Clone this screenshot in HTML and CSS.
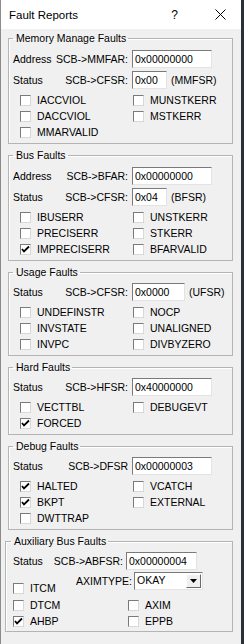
FILE: index.html
```html
<!DOCTYPE html>
<html lang="en">

<head>
    <meta charset="UTF-8">
    <title>Fault Reports</title>
    <link rel="stylesheet" href="styles.css">
</head>

<body>
    <div class="window">
        <div class="titlebar">
            <span class="title">Fault Reports</span>
            <span class="help">?</span>
            <span class="close">
                <svg width="11" height="11" viewBox="0 0 11 11"><path d="M0.5 0.5 L10.5 10.5 M10.5 0.5 L0.5 10.5" stroke="#000" stroke-width="1" fill="none"/></svg>
            </span>
        </div>

        <div class="content">
            <fieldset class="group group--addr">
                <legend>Memory Manage Faults</legend>
                <div class="field-row">
                    <div class="labels"><span>Address</span><span>SCB-&gt;MMFAR:</span></div>
                    <div class="edit edit--wide">0x00000000</div>
                </div>
                <div class="field-row">
                    <div class="labels"><span>Status</span><span>SCB-&gt;CFSR:</span></div>
                    <div class="edit edit--byte">0x00</div>
                    <span class="suffix">(MMFSR)</span>
                </div>
                <div class="checks">
                    <label class="check"><span class="box"></span>IACCVIOL</label>
                    <label class="check"><span class="box"></span>MUNSTKERR</label>
                    <label class="check"><span class="box"></span>DACCVIOL</label>
                    <label class="check"><span class="box"></span>MSTKERR</label>
                    <label class="check"><span class="box"></span>MMARVALID</label>
                </div>
            </fieldset>

            <fieldset class="group group--addr">
                <legend>Bus Faults</legend>
                <div class="field-row">
                    <div class="labels"><span>Address</span><span>SCB-&gt;BFAR:</span></div>
                    <div class="edit edit--wide">0x00000000</div>
                </div>
                <div class="field-row">
                    <div class="labels"><span>Status</span><span>SCB-&gt;CFSR:</span></div>
                    <div class="edit edit--byte">0x04</div>
                    <span class="suffix">(BFSR)</span>
                </div>
                <div class="checks">
                    <label class="check"><span class="box"></span>IBUSERR</label>
                    <label class="check"><span class="box"></span>UNSTKERR</label>
                    <label class="check"><span class="box"></span>PRECISERR</label>
                    <label class="check"><span class="box"></span>STKERR</label>
                    <label class="check"><span class="box checked"><svg width="9" height="9" viewBox="0 0 9 9"><path d="M1 4 L3 6.5 L8 1.5" stroke="#000" stroke-width="1.8" fill="none"/></svg></span>IMPRECISERR</label>
                    <label class="check"><span class="box"></span>BFARVALID</label>
                </div>
            </fieldset>

            <fieldset class="group">
                <legend>Usage Faults</legend>
                <div class="field-row">
                    <div class="labels"><span>Status</span><span>SCB-&gt;CFSR:</span></div>
                    <div class="edit edit--half">0x0000</div>
                    <span class="suffix">(UFSR)</span>
                </div>
                <div class="checks">
                    <label class="check"><span class="box"></span>UNDEFINSTR</label>
                    <label class="check"><span class="box"></span>NOCP</label>
                    <label class="check"><span class="box"></span>INVSTATE</label>
                    <label class="check"><span class="box"></span>UNALIGNED</label>
                    <label class="check"><span class="box"></span>INVPC</label>
                    <label class="check"><span class="box"></span>DIVBYZERO</label>
                </div>
            </fieldset>

            <fieldset class="group">
                <legend>Hard Faults</legend>
                <div class="field-row">
                    <div class="labels"><span>Status</span><span>SCB-&gt;HFSR:</span></div>
                    <div class="edit edit--wide">0x40000000</div>
                </div>
                <div class="checks">
                    <label class="check"><span class="box"></span>VECTTBL</label>
                    <label class="check"><span class="box"></span>DEBUGEVT</label>
                    <label class="check"><span class="box checked"><svg width="9" height="9" viewBox="0 0 9 9"><path d="M1 4 L3 6.5 L8 1.5" stroke="#000" stroke-width="1.8" fill="none"/></svg></span>FORCED</label>
                </div>
            </fieldset>

            <fieldset class="group">
                <legend>Debug Faults</legend>
                <div class="field-row">
                    <div class="labels"><span>Status</span><span>SCB-&gt;DFSR</span></div>
                    <div class="edit edit--wide">0x00000003</div>
                </div>
                <div class="checks">
                    <label class="check"><span class="box checked"><svg width="9" height="9" viewBox="0 0 9 9"><path d="M1 4 L3 6.5 L8 1.5" stroke="#000" stroke-width="1.8" fill="none"/></svg></span>HALTED</label>
                    <label class="check"><span class="box"></span>VCATCH</label>
                    <label class="check"><span class="box checked"><svg width="9" height="9" viewBox="0 0 9 9"><path d="M1 4 L3 6.5 L8 1.5" stroke="#000" stroke-width="1.8" fill="none"/></svg></span>BKPT</label>
                    <label class="check"><span class="box"></span>EXTERNAL</label>
                    <label class="check"><span class="box"></span>DWTTRAP</label>
                </div>
            </fieldset>

            <fieldset class="group group--aux">
                <legend>Auxiliary Bus Faults</legend>
                <div class="field-row">
                    <div class="labels"><span>Status</span><span>SCB-&gt;ABFSR:</span></div>
                    <div class="edit edit--aux">0x00000004</div>
                </div>
                <div class="aux-row">
                    <label class="check"><span class="box"></span>ITCM</label>
                    <div class="axim">
                        <span>AXIMTYPE:</span>
                        <div class="combo">
                            <span class="combo-text">OKAY</span>
                            <span class="combo-btn">
                                <svg width="7" height="4" viewBox="0 0 7 4"><path d="M0 0 H7 L3.5 4 Z" fill="#000"/></svg>
                            </span>
                        </div>
                    </div>
                </div>
                <div class="checks">
                    <label class="check"><span class="box"></span>DTCM</label>
                    <label class="check"><span class="box"></span>AXIM</label>
                    <label class="check"><span class="box checked"><svg width="9" height="9" viewBox="0 0 9 9"><path d="M1 4 L3 6.5 L8 1.5" stroke="#000" stroke-width="1.8" fill="none"/></svg></span>AHBP</label>
                    <label class="check"><span class="box"></span>EPPB</label>
                </div>
            </fieldset>
        </div>
    </div>
</body>

</html>
```

FILE: styles.css
```css
* {
    box-sizing: border-box;
}

body {
    margin: 0;
    width: 244px;
    height: 644px;
    overflow: hidden;
    background: #2b3038;
    font-family: 'Liberation Sans', Arial, sans-serif;
    font-size: 10.5px;
    color: #000;
}

.window {
    width: 241px;
    height: 644px;
    background: #f0f0f0;
    border-left: 1px solid #8c8c8c;
}

.titlebar {
    height: 29px;
    background: #fff;
    display: flex;
    align-items: center;
    padding-left: 8px;
    font-size: 11.5px;
}

.title {
    flex: 1;
}

.help {
    font-size: 12px;
    margin-right: 37px;
}

.close {
    display: flex;
    margin-right: 15px;
}

.content {
    padding-top: 3px;
}

.group {
    margin: 0 0 0 7px;
    padding: 3px 4px 3px 4px;
    width: 225px;
    min-width: 0;
    border: 1px solid #b4b4b4;
    box-shadow: inset 1px 1px 0 #fff;
}

.group + .group {
    margin-top: 5px;
}

.group legend {
    padding: 0 2px 0 3px;
    line-height: 12px;
}

.field-row {
    display: flex;
    align-items: center;
    height: 21px;
}

.group--addr .field-row:first-of-type {
    margin-top: 1px;
}

.labels {
    display: flex;
    justify-content: space-between;
    width: 119px;
    padding-right: 4px;
}

.edit {
    height: 18px;
    background: #fff;
    border: 1px solid;
    border-color: #7a7a7a #e3e3e3 #e3e3e3 #7a7a7a;
    padding-left: 2px;
    line-height: 16px;
}

.edit--wide {
    width: 80px;
}

.edit--byte {
    width: 35px;
}

.edit--half {
    width: 53px;
}

.edit--aux {
    width: 71px;
}

.suffix {
    margin-left: 4px;
}

.checks {
    display: grid;
    grid-template-columns: 113px 1fr;
    padding-left: 7px;
    margin-top: 2px;
}

.check {
    display: flex;
    align-items: center;
    gap: 6px;
    height: 16px;
}

.box {
    width: 11px;
    height: 11px;
    background: #fff;
    border: 1px solid;
    border-color: #7a7a7a #d8d8d8 #d8d8d8 #7a7a7a;
    display: flex;
    align-items: center;
    justify-content: center;
}

.group--aux {
    margin-left: 4px;
    width: 228px;
    padding-left: 5px;
    padding-bottom: 2px;
}

.group--aux .field-row,
.group--aux .aux-row {
    padding-left: 2px;
}

.group--aux .labels {
    width: 113px;
    padding-right: 3px;
}

.group--aux .checks {
    padding-left: 2px;
    margin-top: 1px;
    grid-template-columns: 115px 1fr;
}

.aux-row {
    display: flex;
    height: 25px;
}

.aux-row .check {
    align-self: flex-end;
    width: 63px;
}

.axim {
    display: flex;
    align-items: center;
    gap: 2px;
    height: 18px;
    margin-top: 1px;
}

.combo {
    display: flex;
    width: 69px;
    height: 18px;
    background: #fff;
    border: 1px solid;
    border-color: #7a7a7a #e3e3e3 #e3e3e3 #7a7a7a;
    padding: 1px;
}

.combo-text {
    flex: 1;
    padding-left: 1px;
    line-height: 12px;
}

.combo-btn {
    width: 15px;
    background: #f0f0f0;
    border: 1px solid;
    border-color: #fff #696969 #696969 #fff;
    display: flex;
    align-items: center;
    justify-content: center;
}
```
